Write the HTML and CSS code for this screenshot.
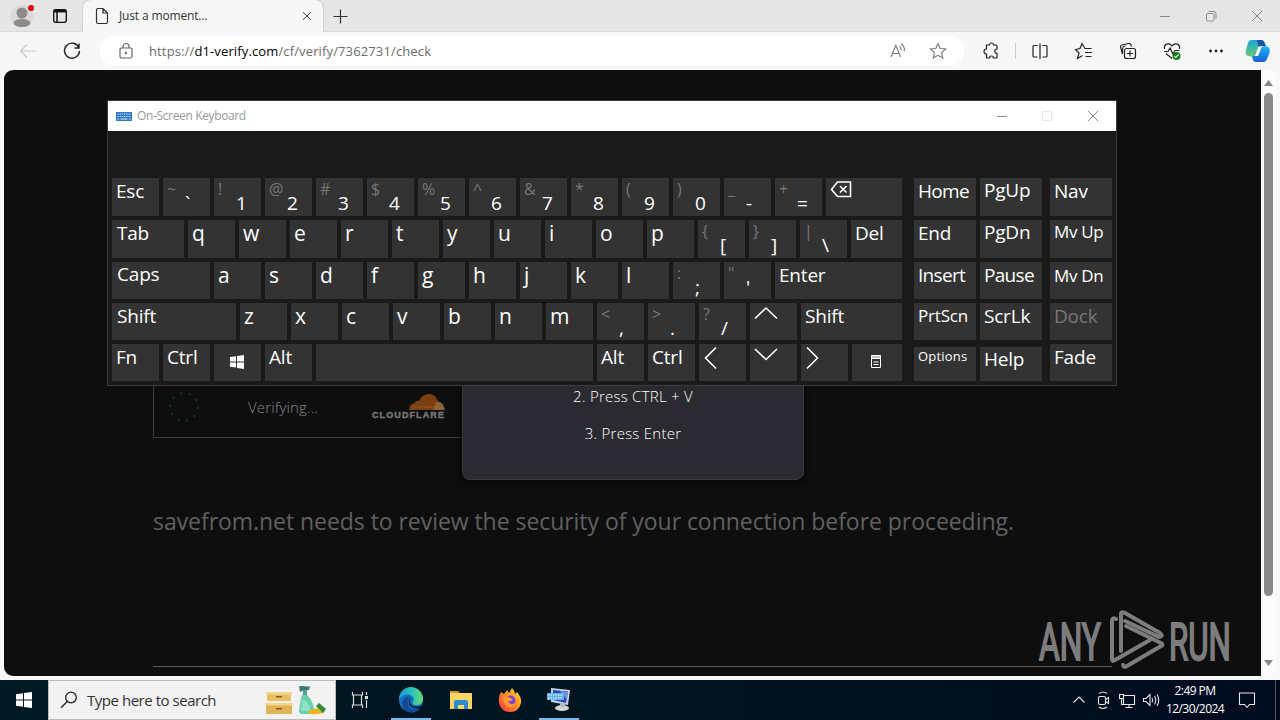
FILE: index.html
```html
<!DOCTYPE html>
<html lang="en">
<head>
    <meta charset="utf-8">
    <title>Just a moment...</title>
    <link rel="stylesheet" href="styles.css">
</head>
<body>
    <div class="tabbar">
        <div class="tab-tools">
            <svg class="avatar" width="26" height="26" viewBox="0 0 26 26">
                <circle cx="13" cy="13" r="11.5" fill="#dcdad8"/>
                <circle cx="13" cy="10" r="5.5" fill="#8f8b88"/>
                <ellipse cx="13" cy="20" rx="8.500" ry="4" fill="#8f8b88"/>
                <circle cx="22" cy="5" r="3" fill="#d8000c"/>
            </svg>
            <svg width="16" height="16" viewBox="0 0 16 16" fill="none" stroke="#111">
                <rect x="1.700" y="1.700" width="12.600" height="12.600" rx="2" stroke-width="1.300"/>
                <path d="M2 3.500H14M5 4V14" stroke-width="1.500"/>
                <path d="M2 3H14" stroke-width="2.500"/>
            </svg>
        </div>
        <div class="tab">
            <svg width="14" height="18" viewBox="0 0 14 18" fill="none" stroke="#333" stroke-width="1.200">
                <path d="M2.500 1.500H8L12.500 6V15a1.500 1.500 0 0 1-1.500 1.500H3A1.500 1.500 0 0 1 1.500 15V3a1.500 1.500 0 0 1 1.500-1.500M8 1.500V6H12.500"/>
            </svg>
            <span class="tab-title">Just a moment...</span>
            <svg width="12" height="12" viewBox="0 0 12 12" stroke="#444" stroke-width="1"><path d="M2 2L10 10M10 2L2 10"/></svg>
        </div>
        <svg class="new-tab" width="16" height="16" viewBox="0 0 16 16" stroke="#333" stroke-width="1.200"><path d="M8.500 1.500V15.500M1.500 8.500H15.500"/></svg>
        <div class="window-buttons">
            <svg width="46" height="32" viewBox="0 0 46 32"><path d="M18 16.500H28"/></svg>
            <svg width="46" height="32" viewBox="0 0 46 32"><rect x="18.500" y="13.500" width="7.500" height="7.500" rx="1.500"/><path d="M20.500 11.500H26a2 2 0 0 1 2 2V19"/></svg>
            <svg width="46" height="32" viewBox="0 0 46 32"><path d="M18 11L28 21M28 11L18 21"/></svg>
        </div>
    </div>

    <div class="toolbar">
        <svg class="back" width="20" height="20" viewBox="0 0 20 20" fill="none" stroke="#c9c9c9" stroke-width="1.100"><path d="M18 10H3M9 3.500L2.500 10L9 16.500"/></svg>
        <svg class="refresh" width="20" height="20" viewBox="0 0 20 20" fill="none" stroke="#222" stroke-width="1.400"><path d="M16.800 6.500A7.500 7.500 0 1 0 17.500 10M17 2.500V7H12.500"/></svg>
        <div class="address">
            <svg width="16" height="18" viewBox="0 0 16 18" fill="none" stroke="#666" stroke-width="1.200"><rect x="2" y="6" width="12" height="10" rx="1.500"/><path d="M5 6V4.500a3 3 0 0 1 6 0V6"/><circle cx="8" cy="11" r=".6" fill="#555"/></svg>
            <span class="url">https://<b>d1-verify.com</b>/cf/verify/7362731/check</span>
            <svg class="read" width="18" height="18" viewBox="0 0 18 18" fill="none" stroke="#777" stroke-width="1.100"><path d="M2 15L6.800 3.500L11.600 15M3.500 11.500H10M10.500 4.500Q12.500 6 12.300 8.500M12 1.800Q16 4.500 15.300 9"/></svg>
            <svg width="18" height="18" viewBox="0 0 18 18" fill="none" stroke="#777" stroke-width="1.100"><path d="M9 1.500L11.200 6.500L16.700 7L12.600 10.700L13.800 16L9 13.300L4.200 16L5.400 10.700L1.300 7L6.800 6.500Z"/></svg>
        </div>
        <div class="actions">
            <svg width="44" height="20" viewBox="0 0 44 20"><path d="M17.500 4H20.500a2 2 0 0 1 4 0H27a1 1 0 0 1 1 1V8a2.200 2.200 0 0 0 0 4.500V16a1 1 0 0 1-1 1H24.500a2 2 0 0 0-4 0H17.500V13a2.500 2.500 0 0 1 0-5Z"/></svg>
            <span class="divider"></span>
            <svg width="44" height="20" viewBox="0 0 44 20"><path d="M19.500 4.500H16a1 1 0 0 0-1 1V15a1 1 0 0 0 1 1H19.500M24.500 4.500H28a1 1 0 0 1 1 1V15a1 1 0 0 1-1 1H24.500M22 2.500V18"/></svg>
            <svg width="44" height="20" viewBox="0 0 44 20"><path d="M29.500 7.500H23L20 2.500L18 7.500L13.500 8.500L17 12L15.500 17.500L20.500 14.500M23 11.500H30M23.500 15.500H29.500"/></svg>
            <svg width="44" height="20" viewBox="0 0 44 20"><rect x="18.500" y="7.500" width="11" height="10" rx="2"/><path d="M24 9.500V15.500M21 12.500H27M16.500 13L14.500 6A2 2 0 0 1 16 4L22.500 2.500A2 2 0 0 1 25 4L25.500 5.500M16.500 13V8a3 3 0 0 1 3-3"/></svg>
            <svg width="44" height="20" viewBox="0 0 44 20"><path d="M14.500 8C13.500 3 19 1 22 5C25 1 30.500 3 29.500 8M14 10.500H18L20 7L23 13L25 9.500H29.500M16 12.500L22 17.500"/><circle cx="26.500" cy="15" r="4" fill="#107c10" stroke="none"/><path d="M24.500 15.500L25.800 16.500L28.500 13.500" stroke="#fff"/></svg>
            <svg class="dots" width="44" height="20" viewBox="0 0 44 20"><circle cx="16.500" cy="10" r="1.400"/><circle cx="22" cy="10" r="1.400"/><circle cx="27.500" cy="10" r="1.400"/></svg>
            <svg class="copilot" width="42" height="26" viewBox="0 0 42 26">
                <defs>
                    <linearGradient id="copA" x1="0" y1="0" x2="0" y2="1"><stop offset="0" stop-color="#18a4d8"/><stop offset="1" stop-color="#6ccb72"/></linearGradient>
                    <linearGradient id="copB" x1="0" y1="0" x2="0" y2="1"><stop offset="0" stop-color="#20b6f5"/><stop offset="1" stop-color="#155fd8"/></linearGradient>
                </defs>
                <path d="M14 2H23Q26 2 27 6L28 8H24Q21 8 20 11L18 17Q17 18.500 13 18.500Q6 18.500 8 12L10 5Q11 2 14 2Z" fill="url(#copA)"/>
                <path d="M19 2H23Q26 2 27 6L28 8H24Q22 8 21 10Z" fill="#1753a6"/>
                <path d="M27 8Q33 8 31.500 15L29 21Q28 24 25 24H18Q15 24 14.500 20L14 18H17Q20 18 21 15L23 10Q24 8 27 8Z" fill="url(#copB)"/>
                <path d="M23.500 8.500L20 18H17L20.500 8.500Z" fill="#fff"/>
            </svg>
        </div>
    </div>

    <div class="viewport">
        <div class="page">
            <div class="verify-box">
                <svg class="spinner" width="34" height="34" viewBox="0 0 34 34"><circle cx="17" cy="17" r="14" fill="none" stroke="#0f3a34" stroke-width="2" stroke-dasharray="2 6.800"/></svg>
                <span class="verify-text">Verifying...</span>
                <div class="cloudflare">
                    <svg width="74" height="17" viewBox="0 0 74 17">
                        <path d="M37 17Q37 11 43 10Q43 7 47 8Q50 1 57 1Q64 1 66 9L68 17Z" fill="#7d3f10"/>
                        <path d="M61 17L64 9Q71 7 73 17Z" fill="#8d6430"/>
                        <path d="M40 14H63" stroke="#a06a40" stroke-width=".6"/>
                    </svg>
                    <span>CLOUDFLARE</span>
                </div>
            </div>
            <p class="review">savefrom.net needs to review the security of your connection before proceeding.</p>
            <div class="footer-line"></div>
            <div class="modal">
                <p>2. Press CTRL + V</p>
                <p>3. Press Enter</p>
            </div>
            <svg class="watermark" width="196" height="64" viewBox="0 0 196 64">
                <g class="watermark-text">
                    <text transform="translate(1 52) scale(.6 1)" textLength="103" lengthAdjust="spacingAndGlyphs">ANY</text>
                    <text transform="translate(131 52) scale(.6 1)" textLength="103" lengthAdjust="spacingAndGlyphs">RUN</text>
                </g>
                <g fill="none" stroke="#7d7d7d" stroke-width="4" stroke-linejoin="round" stroke-linecap="round">
                    <path d="M78 11Q74 9 74 13V51Q74 54 77 52L112 32"/>
                    <path d="M83 43V6Q83 3 87 5L122 25Q126 28 121 29L87 13"/>
                    <path d="M88 18L123 35Q126 37 123 38L89 58Q86 60 85 57"/>
                </g>
            </svg>
        </div>
        <div class="scrollbar">
            <svg width="9" height="6" viewBox="0 0 9 6"><path d="M0 6L4.500 0L9 6Z"/></svg>
            <span class="thumb"></span>
            <svg width="9" height="6" viewBox="0 0 9 6"><path d="M0 0L4.500 6L9 0Z"/></svg>
        </div>
    </div>

    <div class="osk">
        <div class="osk-title">
            <svg width="16" height="9" viewBox="0 0 16 9"><rect width="16" height="9" fill="#2d7cc8"/><path d="M1.500 2H15M1.500 4.500H15" stroke="#dceaf8" stroke-dasharray="1.200 1"/><path d="M1.500 7H3M4.500 7H11.500M13 7H14.500" stroke="#dceaf8"/></svg>
            <span>On-Screen Keyboard</span>
            <div class="window-buttons">
                <svg width="46" height="30" viewBox="0 0 46 30"><path d="M19 15.500H29"/></svg>
                <svg class="disabled" width="46" height="30" viewBox="0 0 46 30"><rect x="18.500" y="10.500" width="9" height="9"/></svg>
                <svg width="46" height="30" viewBox="0 0 46 30"><path d="M18 10L28 20M28 10L18 20"/></svg>
            </div>
        </div>
        <div class="osk-body">
            <div class="keys">
                <div class="row">
                    <div class="key">Esc</div>
                    <div class="key dual"><i>~</i><span>`</span></div>
                    <div class="key dual"><i>!</i><span>1</span></div>
                    <div class="key dual"><i>@</i><span>2</span></div>
                    <div class="key dual"><i>#</i><span>3</span></div>
                    <div class="key dual"><i>$</i><span>4</span></div>
                    <div class="key dual"><i>%</i><span>5</span></div>
                    <div class="key dual"><i>^</i><span>6</span></div>
                    <div class="key dual"><i>&amp;</i><span>7</span></div>
                    <div class="key dual"><i>*</i><span>8</span></div>
                    <div class="key dual"><i>(</i><span>9</span></div>
                    <div class="key dual"><i>)</i><span>0</span></div>
                    <div class="key dual"><i>_</i><span>-</span></div>
                    <div class="key dual"><i>+</i><span>=</span></div>
                    <div class="key fill"><svg width="22" height="22" viewBox="0 0 22 22"><path d="M7.500 4H20.500V18.500H7.500L1.500 11.500ZM10 8L16.500 14.500M16.500 8L10 14.500"/></svg></div>
                </div>
                <div class="row">
                    <div class="key tab-key">Tab</div>
                    <div class="key letter">q</div>
                    <div class="key letter">w</div>
                    <div class="key letter">e</div>
                    <div class="key letter">r</div>
                    <div class="key letter">t</div>
                    <div class="key letter">y</div>
                    <div class="key letter">u</div>
                    <div class="key letter">i</div>
                    <div class="key letter">o</div>
                    <div class="key letter">p</div>
                    <div class="key dual"><i>{</i><span>[</span></div>
                    <div class="key dual"><i>}</i><span>]</span></div>
                    <div class="key dual"><i>|</i><span>\</span></div>
                    <div class="key fill">Del</div>
                </div>
                <div class="row short">
                    <div class="key caps">Caps</div>
                    <div class="key letter">a</div>
                    <div class="key letter">s</div>
                    <div class="key letter">d</div>
                    <div class="key letter">f</div>
                    <div class="key letter">g</div>
                    <div class="key letter">h</div>
                    <div class="key letter">j</div>
                    <div class="key letter">k</div>
                    <div class="key letter">l</div>
                    <div class="key dual"><i>:</i><span>;</span></div>
                    <div class="key dual"><i>"</i><span>'</span></div>
                    <div class="key fill">Enter</div>
                </div>
                <div class="row short">
                    <div class="key shift">Shift</div>
                    <div class="key letter">z</div>
                    <div class="key letter">x</div>
                    <div class="key letter">c</div>
                    <div class="key letter">v</div>
                    <div class="key letter">b</div>
                    <div class="key letter">n</div>
                    <div class="key letter">m</div>
                    <div class="key dual"><i>&lt;</i><span>,</span></div>
                    <div class="key dual"><i>&gt;</i><span>.</span></div>
                    <div class="key dual"><i>?</i><span>/</span></div>
                    <div class="key"><svg width="24" height="24" viewBox="0 0 24 24"><path d="M1 15.500L12 5L23 15.500"/></svg></div>
                    <div class="key fill">Shift</div>
                </div>
                <div class="row short">
                    <div class="key">Fn</div>
                    <div class="key">Ctrl</div>
                    <div class="key icon"><svg width="14" height="14" viewBox="0 0 14 14"><path class="solid" d="M0 2L6 1.200V6.500H0ZM7 1L14 0V6.500H7ZM0 7.500H6V12.500L0 11.800ZM7 7.500H14V14L7 13Z"/></svg></div>
                    <div class="key">Alt</div>
                    <div class="key space"></div>
                    <div class="key">Alt</div>
                    <div class="key">Ctrl</div>
                    <div class="key"><svg width="24" height="26" viewBox="0 0 24 26"><path d="M13 3.500L2.500 14L13 24.500"/></svg></div>
                    <div class="key"><svg width="24" height="24" viewBox="0 0 24 24"><path d="M1 5L12 15.500L23 5"/></svg></div>
                    <div class="key"><svg width="24" height="26" viewBox="0 0 24 26"><path d="M2 3.500L12.500 14L2 24.500"/></svg></div>
                    <div class="key icon fill"><svg width="10" height="13" viewBox="0 0 10 13"><path class="solid" d="M0 0H10V4H0Z"/><path d="M.5 3V12.500H9.500V3M2.500 7H7.500M2.500 9.500H7.500" stroke-width="1"/><path class="slit" d="M1 2H9"/></svg></div>
                </div>
            </div>
            <div class="keys nav">
                <div class="row"><div class="key tight">Home</div><div class="key up">PgUp</div></div>
                <div class="row"><div class="key">End</div><div class="key up">PgDn</div></div>
                <div class="row short"><div class="key tight">Insert</div><div class="key tight">Pause</div></div>
                <div class="row short"><div class="key prt">PrtScn</div><div class="key">ScrLk</div></div>
                <div class="row short low"><div class="key small">Options</div><div class="key">Help</div></div>
            </div>
            <div class="keys side">
                <div class="row"><div class="key">Nav</div></div>
                <div class="row"><div class="key medium high">Mv Up</div></div>
                <div class="row short"><div class="key medium">Mv Dn</div></div>
                <div class="row short"><div class="key off">Dock</div></div>
                <div class="row short"><div class="key">Fade</div></div>
            </div>
        </div>
    </div>

    <div class="taskbar">
        <div class="start"><svg width="16" height="16" viewBox="0 0 16 16" fill="#fff"><path d="M0 2.200L7 1.200V7.500H0ZM8 1.100L16 0V7.500H8ZM0 8.500H7V14.800L0 13.800ZM8 8.500H16V16L8 14.900Z"/></svg></div>
        <div class="search">
            <svg width="18" height="18" viewBox="0 0 18 18" fill="none" stroke="#222" stroke-width="1.300"><circle cx="11" cy="6.500" r="5.300"/><path d="M7.200 10.500L1 16.700"/></svg>
            <span>Type here to search</span>
            <svg class="search-art" width="62" height="32" viewBox="0 0 62 32">
                <rect x="2" y="8" width="24" height="9" rx="1" fill="#e9bf62"/><rect x="1" y="8" width="26" height="2.500" fill="#f3d68d"/>
                <rect x="1" y="19" width="26" height="11" rx="1" fill="#e2b352"/><rect x="0" y="19" width="28" height="2.500" fill="#f3d68d"/>
                <rect x="11" y="12" width="6" height="1.500" fill="#7d5c22"/><rect x="11" y="24" width="6" height="1.500" fill="#7d5c22"/>
                <path d="M34 2L45 2.500L44 6H39L35 8Z" fill="#357e78"/>
                <rect x="38" y="6" width="4" height="5" fill="#579f91"/>
                <path d="M37 11H42Q49 18 49 27Q49 30 45 30H37Q34 30 34 27Q35 17 37 11Z" fill="#67cfae"/>
                <path d="M37 15Q44 17 46 27H36Z" fill="#8be0c6"/>
                <path d="M42 27L53 24L60 27Q57 31 45 30Z" fill="#e8b723"/>
                <path d="M51 22L54 19L61 25L58 29Z" fill="#388839"/>
            </svg>
        </div>
        <div class="apps">
            <div class="app">
                <svg width="18" height="18" viewBox="0 0 18 18" fill="none" stroke="#ddd" stroke-width="1.200"><path d="M1.500 1V4H11.500V1M1.500 17V14H11.500V17M2.500 4V14M10.500 4V14M15.500 1V4M15.500 9V17"/><path d="M14 6.500H17" stroke-width="3"/></svg>
            </div>
            <div class="app open">
                <svg width="26" height="26" viewBox="0 0 26 26">
                    <defs><linearGradient id="edge" x1="0" y1="0" x2="1" y2="0"><stop offset="0" stop-color="#179bd5"/><stop offset=".6" stop-color="#2fc6b5"/><stop offset="1" stop-color="#69d968"/></linearGradient></defs>
                    <circle cx="13" cy="13" r="12" fill="#1570c0"/>
                    <path d="M1 12A12 12 0 0 1 25 12Q25 18 18 18Q14 18 15 15Q17 12 14 9Q8 5 1 12Z" fill="url(#edge)"/>
                    <path d="M12 10Q7 15 12 21Q16 24 23 20Q17 29 8 24Q3 19 5 13Q8 9 12 10Z" fill="#114a98"/>
                    <path d="M13 11Q10 16 15 19Q19 21 25 18L23.500 20.500Q17 23 12 19Q9 14 13 11Z" fill="#001722"/>
                </svg>
            </div>
            <div class="app">
                <svg width="24" height="22" viewBox="0 0 24 22"><path d="M1 2H9L11 4H22V8H1Z" fill="#d9952b"/><rect x="1" y="4" width="22" height="16" fill="#f9d567"/><path d="M1 2H9L10 4H1Z" fill="#d9952b"/><path d="M5 20V13Q5 11 7 11H17Q19 11 19 13V20H15V16H9V20Z" fill="#2d8bd0"/></svg>
            </div>
            <div class="app">
                <svg width="24" height="26" viewBox="0 0 24 26">
                    <defs><linearGradient id="fox" x1="1" y1="0" x2="0" y2="1"><stop offset="0" stop-color="#ffe34a"/><stop offset=".5" stop-color="#ff8a20"/><stop offset="1" stop-color="#f32b56"/></linearGradient></defs>
                    <path d="M3 5L6 7L9 3L11 6L14 1Q17 4 17 7L19 5Q24 11 23 16Q21 25 12 25Q3 25 1 16Q0 9 3 5Z" fill="url(#fox)"/>
                    <circle cx="12.500" cy="13.500" r="5" fill="#7b43d4"/>
                    <path d="M5 11Q9 8 12 11L15 12Q13 15 10 14Q12 19 18 16Q15 22 9 19Q5 16 5 11Z" fill="#ff9b28"/>
                </svg>
            </div>
            <div class="app open">
                <svg width="26" height="26" viewBox="0 0 26 26"><path d="M5 1L24 3L22 18L5 15Z" fill="#c4d4e8"/><path d="M7 3L22 4.500L20 16L7 13Z" fill="#2948b6"/><path d="M14 4L22 4.500L21 13Z" fill="#7390d9"/><ellipse cx="16" cy="21" rx="7" ry="3" fill="#d5d5d5"/><rect x="14" y="16" width="5" height="4" fill="#bbb"/><rect x="1" y="6" width="17" height="7" fill="#5eb2ef"/><path d="M2 8H17M2 11H17" stroke="#fff" stroke-dasharray="1.500 1"/></svg>
            </div>
        </div>
        <div class="tray">
            <svg width="24" height="20" viewBox="0 0 24 20"><path d="M6.500 12.500L12 7L17.500 12.500"/></svg>
            <svg width="24" height="20" viewBox="0 0 24 20"><rect x="7.500" y="6.500" width="7" height="8" rx="1.500"/><path d="M14.500 9.500L17.500 7.500V13.500L14.500 11.500M8 3.500Q12 .5 16 3.500M8 17Q12 20 16 17"/></svg>
            <svg width="24" height="20" viewBox="0 0 24 20"><path d="M9 5.500H19.500V14.500H8.500V9M14 14.500V17.500M10.500 17.500H17.500M4.500 4.500H8.500V8.500H4.500ZM6.500 8.500V14.500H8.500"/></svg>
            <svg width="24" height="20" viewBox="0 0 24 20"><path d="M4.500 8.500H7L11 4.500V15.500L7 11.500H4.500ZM13 8Q14.500 10 13 12.500M15.500 6Q18 10 15.500 14.500M18 4.500Q21.500 10 18 16"/></svg>
            <div class="clock"><span>2:49 PM</span><span>12/30/2024</span></div>
            <svg class="notify" width="18" height="18" viewBox="0 0 18 18"><path d="M1.500 2H16.500V13.500H11.500L9 16.500L6.500 13.500H1.500Z"/></svg>
            <span class="show-desktop"></span>
        </div>
    </div>
</body>
</html>
```

FILE: styles.css
```css
body {
    margin: 0;
    width: 1280px;
    height: 720px;
    overflow: hidden;
    display: flex;
    flex-direction: column;
    position: relative;
    background-color: #f7f7f7;
    font-family: "Open Sans", "Noto Sans", sans-serif;
}

svg {
    display: block;
    flex: none;
}

p {
    margin: 0;
}

/* browser tabs */
.tabbar {
    height: 32px;
    flex: none;
    display: flex;
    align-items: center;
    background-color: #e6e6e6;
    border-bottom: 1px solid #dadada;
    box-sizing: border-box;
}

.tab-tools {
    width: 83px;
    box-sizing: border-box;
    padding-left: 9px;
    display: flex;
    align-items: center;
    gap: 17px;
}

.tab {
    width: 240px;
    height: 32px;
    box-sizing: border-box;
    padding: 0 10px 0 12px;
    display: flex;
    align-items: center;
    background-color: #f7f7f7;
    border-radius: 8px 8px 0 0;
    box-shadow: 0 0 2px rgba(0, 0, 0, 0.3);
}

.tab-title {
    flex: 1;
    padding-left: 10px;
    font-size: 12px;
    letter-spacing: -0.15px;
    color: #333;
}

.new-tab {
    margin-left: 9px;
}

.window-buttons {
    margin-left: auto;
    display: flex;
}

.window-buttons svg {
    fill: none;
    stroke: #888;
}

.window-buttons .disabled {
    stroke: #e8e8e8;
}

/* address row */
.toolbar {
    height: 38px;
    flex: none;
    display: flex;
    align-items: center;
    position: relative;
    background-color: #f7f7f7;
}

.back {
    margin-left: 18px;
}

.refresh {
    margin-left: 24px;
}

.address {
    width: 864px;
    height: 30px;
    margin-left: 18px;
    box-sizing: border-box;
    padding: 0 17px 0 18px;
    display: flex;
    align-items: center;
    background-color: #fff;
    border-radius: 15px;
}

.url {
    flex: 1;
    padding-left: 15px;
    font-size: 13px;
    letter-spacing: 0.13px;
    color: #6c6c6c;
}

.url b {
    font-weight: normal;
    color: #000;
}

.read {
    margin-right: 22px;
}

.actions {
    flex: 1;
    padding-left: 5px;
    display: flex;
    align-items: center;
}

.actions svg {
    fill: none;
    stroke: #222;
    stroke-width: 1.2px;
}

.actions .copilot {
    stroke: none;
}

.actions .dots {
    fill: #222;
    stroke: none;
}

.divider {
    width: 1px;
    height: 16px;
    margin: 0 2px;
    background-color: #ccc;
}

/* web page */
.viewport {
    height: 606px;
    flex: none;
    margin: 0 4px 4px;
    display: flex;
}

.page {
    width: 1257px;
    position: relative;
    background-color: #0e0e0e;
    border-radius: 9px 0 0 9px;
    box-sizing: border-box;
    padding: 307px 149px 0;
}

.verify-box {
    width: 400px;
    height: 61px;
    box-sizing: border-box;
    padding: 0 0 2px 13px;
    display: flex;
    align-items: center;
    border: 1px solid #3c3c3c;
}

.verify-text {
    width: 124px;
    padding-left: 47px;
    font-size: 15px;
    letter-spacing: 0.15px;
    font-weight: 300;
    color: #888;
}

.cloudflare span {
    display: block;
    font: bold 9px/10px "Liberation Sans", sans-serif;
    letter-spacing: 1.1px;
    color: #777;
    -webkit-text-stroke: 0.4px #777;
}

.review {
    margin-top: 67px;
    font-size: 23px;
    line-height: 32px;
    letter-spacing: -0.05px;
    white-space: nowrap;
    color: #606060;
}

.footer-line {
    height: 1px;
    margin-top: 129px;
    background-color: #5a5a5a;
}

.modal {
    position: absolute;
    left: 458px;
    top: 280px;
    width: 342px;
    height: 130px;
    box-sizing: border-box;
    padding-top: 34px;
    border: 1px solid #3a3a3e;
    border-radius: 8px;
    background-color: #2b2a30;
    box-shadow: 0 3px 8px #050505;
    text-align: center;
    font-size: 15px;
    font-weight: 300;
    line-height: 23px;
    letter-spacing: 0.25px;
    color: #fff;
}

.modal p + p {
    margin-top: 14px;
}

.watermark {
    position: absolute;
    left: 1034px;
    top: 538px;
}

.watermark-text {
    font-family: Roboto, sans-serif;
    font-size: 51px;
    fill: #7d7d7d;
    stroke: #7d7d7d;
    stroke-width: 2px;
}

.scrollbar {
    width: 15px;
    box-sizing: border-box;
    padding: 10px 0;
    display: flex;
    flex-direction: column;
    align-items: center;
    gap: 7px;
    background-color: #fcfcfc;
    border-radius: 0 8px 8px 0;
    fill: #858585;
}

.thumb {
    width: 9px;
    height: 504px;
    margin-bottom: 57px;
    border-radius: 5px;
    background-color: #8a8a8a;
}

/* on-screen keyboard window */
.osk {
    position: absolute;
    left: 107px;
    top: 100px;
    width: 1010px;
    height: 286px;
    box-sizing: border-box;
    border: 1px solid #3b3b3b;
    background-color: #1a1a1a;
    color: #fff;
}

.osk-title {
    height: 30px;
    padding-left: 8px;
    display: flex;
    align-items: center;
    background-color: #fff;
    color: #999;
    font-size: 12px;
    letter-spacing: -0.36px;
}

.osk-title span {
    padding: 0 0 2px 5px;
}

.osk-body {
    padding: 47px 4px 0;
    display: flex;
}

.keys {
    width: 790px;
    display: flex;
    flex-direction: column;
    gap: 4px;
}

.row {
    height: 38px;
    display: flex;
    gap: 4px;
}

.row.short {
    height: 37px;
}

.key {
    width: 47px;
    flex: none;
    box-sizing: border-box;
    padding-left: 4px;
    background-color: #333;
    font-size: 19px;
    line-height: 26px;
    letter-spacing: -0.2px;
    white-space: nowrap;
}

.key svg {
    fill: none;
    stroke: #fff;
    stroke-width: 1.6px;
}

.key .solid {
    fill: #fff;
    stroke: none;
}

.key .slit {
    stroke: #333;
    stroke-width: 0.6px;
}

.letter {
    font-size: 21px;
    line-height: 27px;
}

.dual i {
    float: left;
    width: 18px;
    font-style: normal;
    font-size: 16px;
    line-height: 23px;
    color: #777;
}

.dual span {
    float: left;
    padding-top: 13px;
    line-height: 25px;
}

.icon {
    display: flex;
    align-items: center;
    justify-content: center;
    padding: 0 2px 2px 0;
}

.fill {
    width: auto;
    flex: 1;
}

.tab-key,
.caps,
.shift {
    width: 72px;
    padding-left: 5px;
}

.caps {
    width: 98px;
    line-height: 25px;
}

.shift {
    width: 124px;
}

.space {
    width: 277px;
}

.nav {
    width: 128px;
    margin-left: 12px;
}

.side {
    width: 62px;
    margin-left: 8px;
}

.nav .key,
.side .key {
    width: 62px;
}

.low {
    align-items: flex-end;
}

.low .key {
    height: 34px;
    line-height: 25px;
}

.key.up {
    line-height: 24px;
}

.key.tight {
    letter-spacing: -0.7px;
}

.key.prt {
    font-size: 17px;
}

.key.medium {
    font-size: 17px;
    letter-spacing: -0.35px;
    line-height: 28px;
}

.key.high {
    line-height: 23px;
}

.low .key.small {
    font-size: 13px;
    line-height: 18px;
    letter-spacing: 0.2px;
}

.key.off {
    color: #777;
}

/* taskbar */
.taskbar {
    height: 40px;
    flex: none;
    display: flex;
    background: linear-gradient(90deg, #001922, #00141f 50%, #000b1e);
}

.start {
    width: 48px;
    display: flex;
    align-items: center;
    justify-content: center;
}

.search {
    width: 288px;
    box-sizing: border-box;
    padding: 0 8px 0 11px;
    display: flex;
    align-items: center;
    background-color: #f2f2f2;
    border: 1px solid #bbb;
    font-size: 15px;
    letter-spacing: -0.47px;
    color: #333;
}

.search span {
    flex: 1;
    padding-left: 9px;
}

.apps {
    display: flex;
    gap: 1px;
}

.app {
    width: 48px;
    box-sizing: border-box;
    display: flex;
    align-items: center;
    justify-content: center;
}

.open {
    background: linear-gradient(#76b9ed, #76b9ed) center bottom / 40px 2px no-repeat;
}

.app.open:nth-child(2) {
    width: 51px;
}

.tray {
    margin-left: auto;
    padding-right: 4px;
    display: flex;
    align-items: center;
    fill: none;
    stroke: #e8e8e8;
    stroke-width: 1.1px;
}

.clock {
    width: 64px;
    display: flex;
    flex-direction: column;
    align-items: center;
    font-size: 12px;
    line-height: 18px;
    letter-spacing: -0.55px;
    color: #fff;
}

.notify {
    margin: 0 19px 0 11px;
}

.show-desktop {
    width: 1px;
    height: 40px;
    background-color: #4a5360;
}
```
